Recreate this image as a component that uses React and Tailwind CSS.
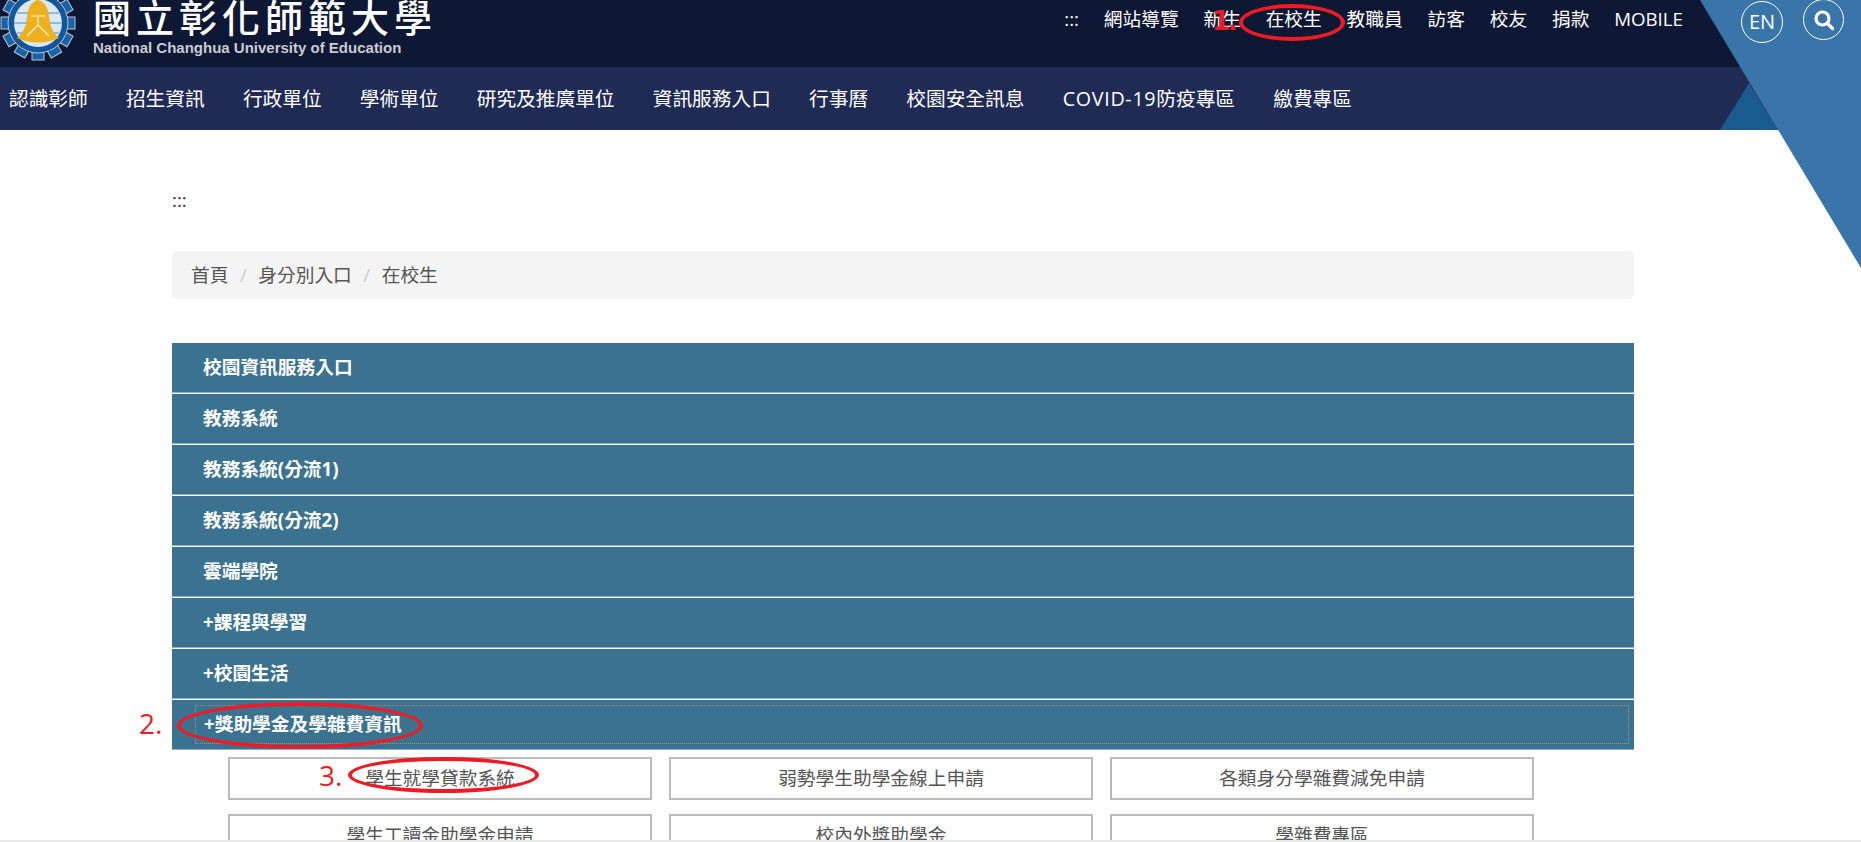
const topLinks = [":::", "網站導覽", "新生", "在校生", "教職員", "訪客", "校友", "捐款", "MOBILE"];
const rows = ["校園資訊服務入口", "教務系統", "教務系統(分流1)", "教務系統(分流2)", "雲端學院", "+課程與學習", "+校園生活"];
const buttons = ["學生就學貸款系統", "弱勢學生助學金線上申請", "各類身分學雜費減免申請", "學生工讀金助學金申請", "校內外獎助學金", "學雜費專區"];

function Logo() {
  const teeth = Array.from({ length: 12 }, (_, i) => i * 30);
  return (
    <svg width="76" height="62" viewBox="0 0 76 62" className="shrink-0 block">
      <g transform="translate(38 23)">
        {teeth.map((a) => (
          <rect key={a} x="-6" y="-37" width="12" height="12" fill="#1a62a8" stroke="#b9c6d4" strokeWidth="1" transform={`rotate(${a})`} />
        ))}
        <circle r="30" fill="#14569c" stroke="#b9c6d4" strokeWidth="1" />
        <circle r="24" fill="#d8e8f4" />
        <path d="M-24 0H24M-21 -10H21M-21 10H21" stroke="#7fa9cf" strokeWidth="1.5" />
        <path d="M-4 -21 Q0 -25 4 -21 Q10 -18 11 -6 Q12 8 21 15 Q0 24 -21 15 Q-12 8 -11 -6 Q-10 -18 -4 -21Z" fill="#eeb01f" />
        <path d="M-7 -7H7M0 -7V2M0 2L-11 13M0 2L11 13" stroke="#fff4cf" strokeWidth="1.2" fill="none" />
      </g>
    </svg>
  );
}

export default function App() {
  return (
    <div className="relative h-[842px] w-full overflow-hidden bg-white font-['Open_Sans','Noto_Sans_CJK_TC',sans-serif] text-[18.72px]">
      <div className="absolute right-0 top-0 z-10 h-[268px] w-[161px] bg-[#3a75aa] [clip-path:polygon(0_0,100%_0,100%_100%)]" />
      <div className="absolute left-[1720px] top-[83px] z-0 h-[47px] w-[58px] bg-[#1a5a8c] [clip-path:polygon(50%_0,100%_100%,0_100%)]" />

      <header className="flex h-[67px] items-start bg-[#0e1733]">
        <Logo />
        <div className="ml-[17px] mt-[-9px] flex w-[340px] flex-col text-white">
          <span className="h-[49px] whitespace-nowrap font-['Noto_Sans_CJK_TC',sans-serif] text-[38px] font-medium leading-[49px] tracking-[5px]">國立彰化師範大學</span>
          <span className="whitespace-nowrap font-['Liberation_Sans',sans-serif] text-[15px] font-bold leading-[16px] text-[#c9ccd4]">National Changhua University of Education</span>
        </div>
        <nav className="ml-auto mt-[7px] flex gap-[24.8px] text-white">
          {topLinks.map((t) => (
            <span key={t} className="whitespace-nowrap leading-[24px]">{t}</span>
          ))}
        </nav>
        <div className="relative z-20 ml-[58px] mr-[17px] mt-px flex items-start gap-[20px] text-[20px] text-white">
          <span className="flex h-[42px] w-[42px] items-center justify-center rounded-full border border-white">EN</span>
          <span className="mt-[-2px] flex h-[41px] w-[41px] items-center justify-center rounded-full border border-white">
            <svg width="22" height="22" viewBox="0 0 22 22" fill="none" stroke="white" strokeWidth="3.2" strokeLinecap="round">
              <circle cx="9.5" cy="9.5" r="6.5" />
              <path d="M14.5 14.5L19.5 19.5" />
            </svg>
          </span>
        </div>
      </header>

      <nav className="flex h-[63px] items-center gap-[38.2px] bg-[#1f2b55] pl-[9px] text-[19.7px] text-white">
        <span className="whitespace-nowrap">認識彰師</span>
        <span className="whitespace-nowrap">招生資訊</span>
        <span className="whitespace-nowrap">行政單位</span>
        <span className="whitespace-nowrap">學術單位</span>
        <span className="whitespace-nowrap">研究及推廣單位</span>
        <span className="whitespace-nowrap">資訊服務入口</span>
        <span className="whitespace-nowrap">行事曆</span>
        <span className="whitespace-nowrap">校園安全訊息</span>
        <span className="whitespace-nowrap"><span className="tracking-[0.7px]">COVID-19</span>防疫專區</span>
        <span className="whitespace-nowrap">繳費專區</span>
      </nav>

      <main className="mx-[172px] w-[1462px] text-[#555]">
        <div className="mt-[58px] h-[24px] leading-[24px] text-[#333]">:::</div>
        <div className="mt-[39px] flex h-[48px] items-center rounded-[6px] bg-[#f4f4f4] pl-[19px]">
          <span>首頁</span>
          <span className="mx-[11.5px] text-[#ccc]">/</span>
          <span>身分別入口</span>
          <span className="mx-[11.5px] text-[#ccc]">/</span>
          <span>在校生</span>
        </div>

        <div className="mt-[44px]">
          {rows.map((t) => (
            <div key={t} className="mb-px flex h-[50px] items-center border-b border-[#8fb0c2] bg-[#3a728f] pl-[31px] font-bold text-white">{t}</div>
          ))}
          <div className="h-[50px] border-b border-[#8fb0c2] bg-[#3a728f] pl-[23px] pr-[5px] pt-[5px]">
            <div className="flex h-[39px] items-center border border-dotted border-[#a98f7c] pl-[8px] font-bold text-white">+獎助學金及學雜費資訊</div>
          </div>
        </div>

        <div className="ml-[56px] mt-[7px] grid w-[1306px] grid-cols-3 gap-x-[17px] gap-y-[14px]">
          {buttons.map((t) => (
            <div key={t} className="flex h-[43px] items-center justify-center border-2 border-[#bbb] bg-white">{t}</div>
          ))}
        </div>
      </main>

      <div className="absolute bottom-0 left-0 h-[2px] w-full bg-[#e8e8e8]" />

      <span className="absolute left-[1212px] top-[3px] z-20 font-['DejaVu_Sans',sans-serif] text-[26px] font-bold tracking-[-2px] leading-[36px] text-[#ed1c24]">1.</span>
      <span className="absolute left-[1239px] top-[4px] z-20 h-[37px] w-[106px] rounded-[50%] border-4 border-[#ed1c24]" />
      <span className="absolute left-[139px] top-[705px] z-20 text-[28px] leading-[36px] text-[#ed1c24]">2.</span>
      <span className="absolute left-[177px] top-[702px] z-20 h-[47px] w-[246px] rounded-[50%] border-4 border-[#ed1c24]" />
      <span className="absolute left-[319px] top-[757px] z-20 text-[28px] leading-[36px] text-[#ed1c24]">3.</span>
      <span className="absolute left-[348px] top-[757px] z-20 h-[36px] w-[191px] rounded-[50%] border-4 border-[#ed1c24]" />
    </div>
  );
}
